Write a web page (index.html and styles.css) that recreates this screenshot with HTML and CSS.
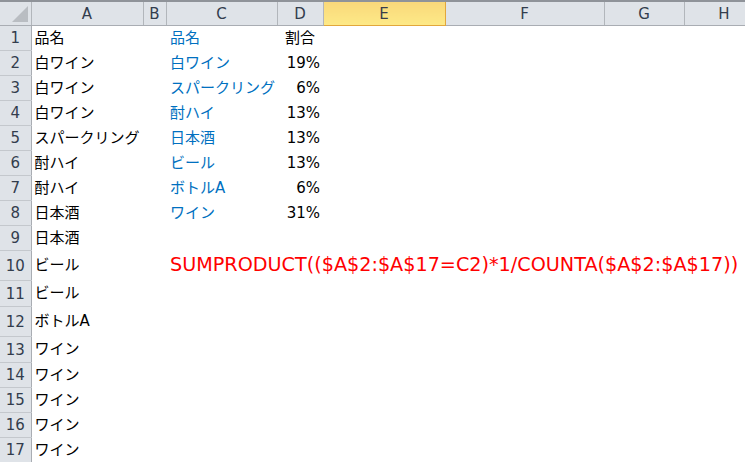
FILE: index.html
```html
<!DOCTYPE html>
<html lang="ja">
<head>
    <meta charset="UTF-8">
    <title>割合 - Sheet1</title>
    <link rel="stylesheet" href="styles.css">
</head>
<body>
    <table class="sheet">
        <colgroup>
            <col class="col-rh">
            <col class="col-a">
            <col class="col-b">
            <col class="col-c">
            <col class="col-d">
            <col class="col-e">
            <col class="col-f">
            <col class="col-g">
            <col class="col-h">
        </colgroup>
        <thead>
            <tr class="col-heads">
                <th class="corner"><span class="corner-mark"></span></th>
                <th>A</th>
                <th>B</th>
                <th>C</th>
                <th>D</th>
                <th class="selected">E</th>
                <th>F</th>
                <th>G</th>
                <th>H</th>
            </tr>
        </thead>
        <tbody>
            <tr><th>1</th><td>品名</td><td></td><td class="blue">品名</td><td class="center">割合</td><td></td><td></td><td></td><td></td></tr>
            <tr><th>2</th><td>白ワイン</td><td></td><td class="blue">白ワイン</td><td class="num">19%</td><td></td><td></td><td></td><td></td></tr>
            <tr><th>3</th><td>白ワイン</td><td></td><td class="blue">スパークリング</td><td class="num">6%</td><td></td><td></td><td></td><td></td></tr>
            <tr><th>4</th><td>白ワイン</td><td></td><td class="blue">酎ハイ</td><td class="num">13%</td><td></td><td></td><td></td><td></td></tr>
            <tr><th>5</th><td>スパークリング</td><td></td><td class="blue">日本酒</td><td class="num">13%</td><td></td><td></td><td></td><td></td></tr>
            <tr><th>6</th><td>酎ハイ</td><td></td><td class="blue">ビール</td><td class="num">13%</td><td></td><td></td><td></td><td></td></tr>
            <tr><th>7</th><td>酎ハイ</td><td></td><td class="blue">ボトルA</td><td class="num">6%</td><td></td><td></td><td></td><td></td></tr>
            <tr><th>8</th><td>日本酒</td><td></td><td class="blue">ワイン</td><td class="num">31%</td><td></td><td></td><td></td><td></td></tr>
            <tr><th>9</th><td>日本酒</td><td></td><td></td><td></td><td></td><td></td><td></td><td></td></tr>
            <tr class="tall"><th>10</th><td>ビール</td><td></td><td class="formula">SUMPRODUCT(($A$2:$A$17=C2)*1/COUNTA($A$2:$A$17))</td><td></td><td></td><td></td><td></td><td></td></tr>
            <tr class="mid"><th>11</th><td>ビール</td><td></td><td></td><td></td><td></td><td></td><td></td><td></td></tr>
            <tr class="tall"><th>12</th><td>ボトルA</td><td></td><td></td><td></td><td></td><td></td><td></td><td></td></tr>
            <tr class="mid"><th>13</th><td>ワイン</td><td></td><td></td><td></td><td></td><td></td><td></td><td></td></tr>
            <tr><th>14</th><td>ワイン</td><td></td><td></td><td></td><td></td><td></td><td></td><td></td></tr>
            <tr><th>15</th><td>ワイン</td><td></td><td></td><td></td><td></td><td></td><td></td><td></td></tr>
            <tr><th>16</th><td>ワイン</td><td></td><td></td><td></td><td></td><td></td><td></td><td></td></tr>
            <tr><th>17</th><td>ワイン</td><td></td><td></td><td></td><td></td><td></td><td></td><td></td></tr>
        </tbody>
    </table>
</body>
</html>
```

FILE: styles.css
```css
* {
    margin: 0;
    padding: 0;
    box-sizing: border-box;
}

body {
    background: #fff;
    font-family: "DejaVu Sans", "Noto Sans CJK JP", sans-serif;
    font-size: 15px;
    color: #000;
    overflow: hidden;
}

.sheet {
    table-layout: fixed;
    border-collapse: collapse;
    width: 764px;
    border-top: 2px solid #8f9399;
}

.col-rh { width: 31px; }
.col-a { width: 112px; }
.col-b { width: 23px; }
.col-c { width: 111px; }
.col-d { width: 46px; }
.col-e { width: 122px; }
.col-f { width: 159px; }
.col-g { width: 80px; }
.col-h { width: 80px; }

.col-heads th {
    height: 24px;
    background: #dfe3e8;
    color: #333d4d;
    font-weight: normal;
    text-align: center;
    border-right: 1px solid #b2b6bb;
    border-bottom: 1px solid #a9adb3;
    padding-top: 1px;
}

.col-heads th.selected {
    background: linear-gradient(#f9d87a, #fde987);
    border: 1px solid #e2a73c;
    border-top: none;
    color: #3a3d4a;
}

.col-heads .corner {
    position: relative;
}

.corner-mark {
    position: absolute;
    right: 3px;
    bottom: 3px;
    width: 0;
    height: 0;
    border-left: 16px solid transparent;
    border-bottom: 16px solid #b9bdc2;
}

tbody tr {
    height: 25px;
}

tbody tr.tall {
    height: 30px;
}

tbody tr.mid {
    height: 26px;
}

tbody th {
    background: #dfe3e8;
    color: #333d4d;
    font-weight: normal;
    text-align: center;
    border-right: 1px solid #a9adb3;
    border-bottom: 1px solid #c4c8cd;
    padding-top: 1px;
}

tbody td {
    padding: 0 3px 0 3px;
    white-space: nowrap;
    overflow: visible;
    vertical-align: middle;
    line-height: 20px;
}

td.blue {
    color: #0070c0;
    padding-left: 4px;
}

td.num {
    text-align: right;
}

td.center {
    text-align: center;
}

td.formula {
    color: #ff0000;
    font-size: 19.2px;
    padding-left: 4px;
}
```
